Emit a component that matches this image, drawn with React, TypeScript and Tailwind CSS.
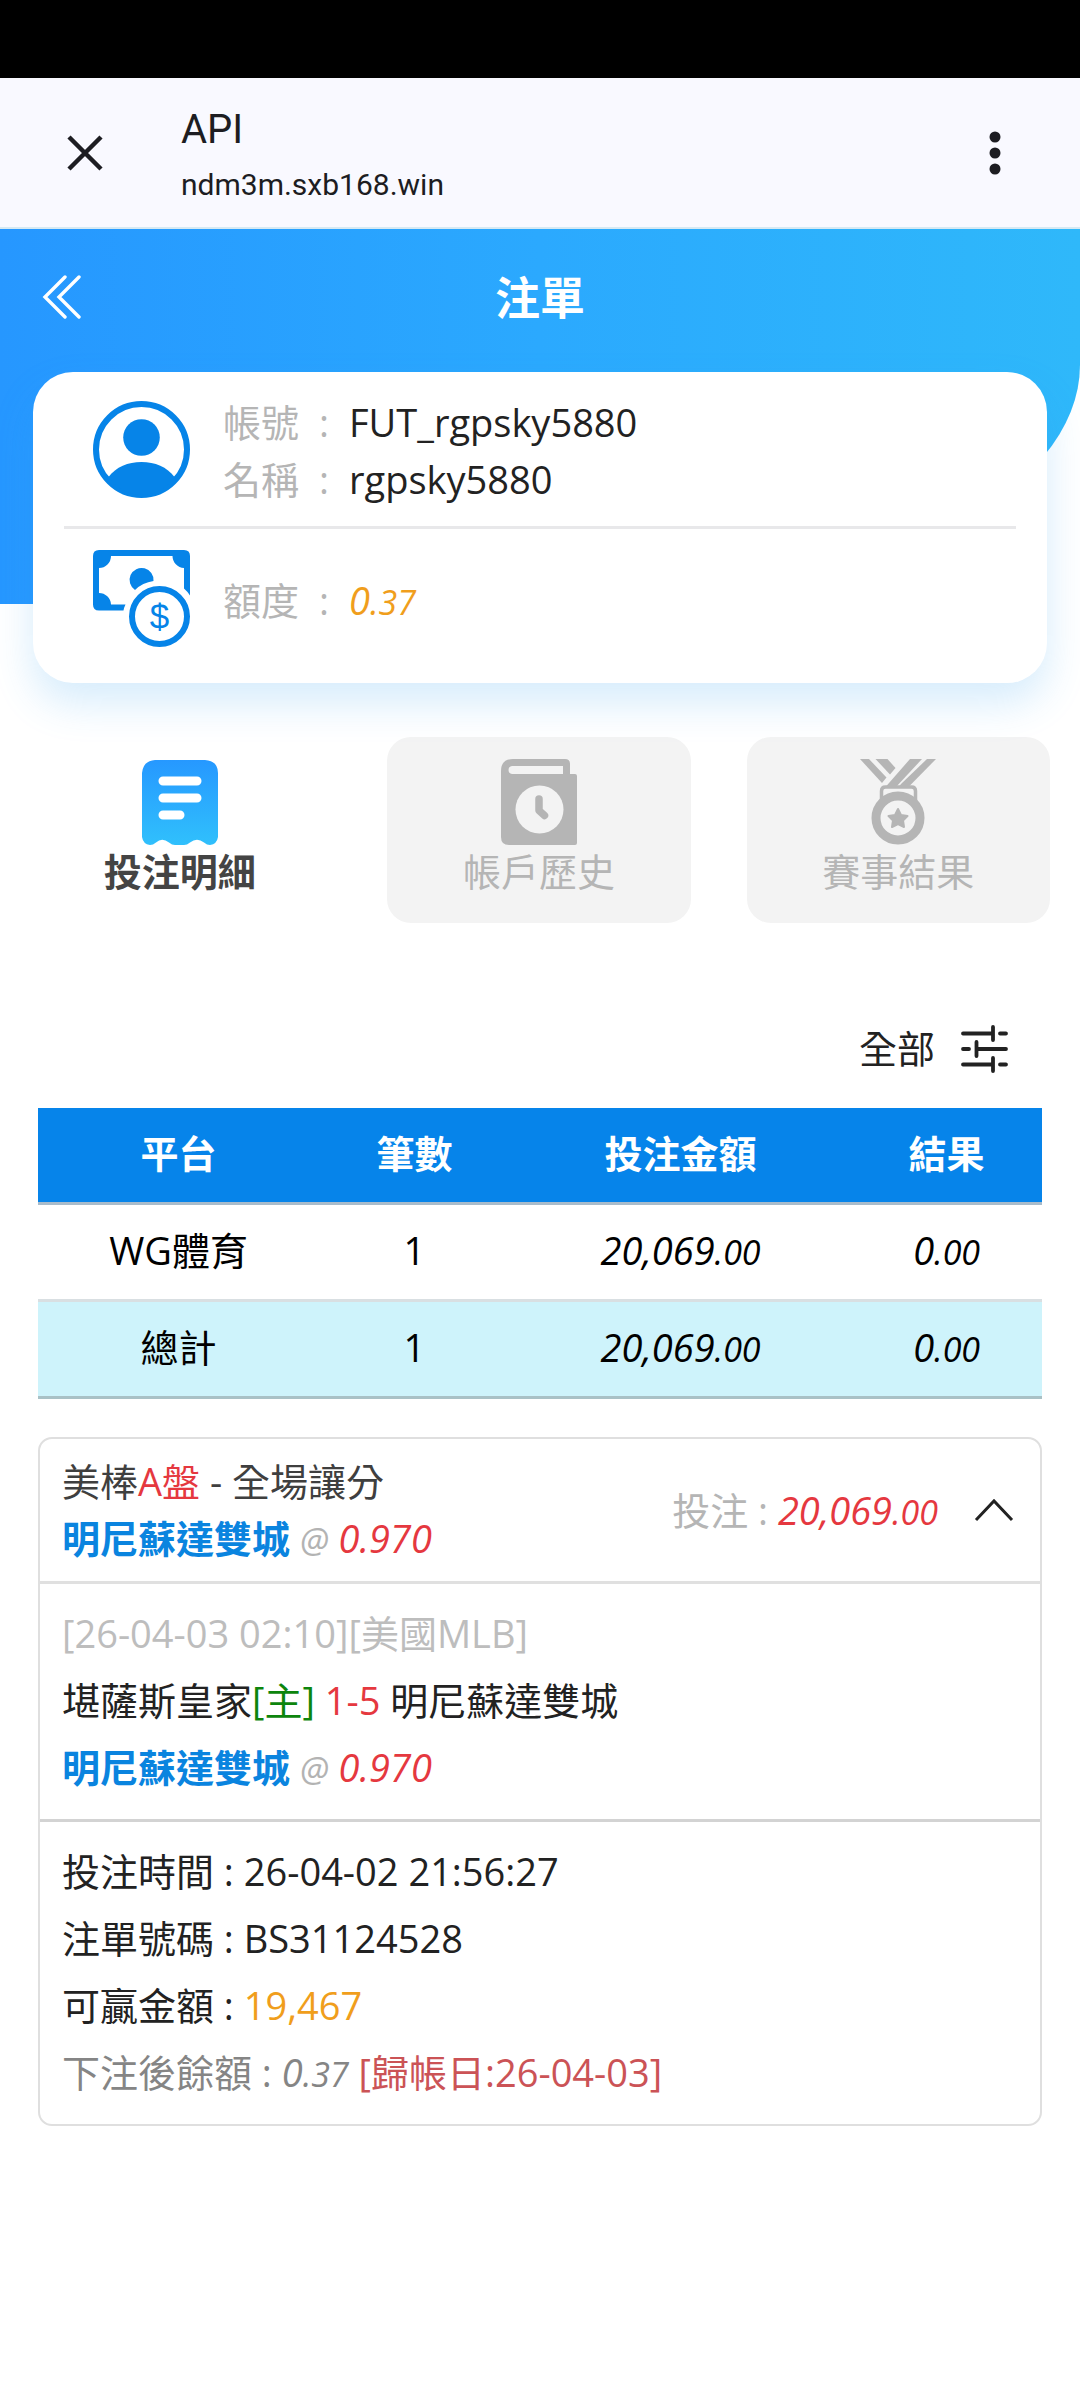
import React, { useState } from 'react'

type Tab = 'bets' | 'history' | 'results'

const CloseIcon = () => (
  <svg className="size-9" viewBox="0 0 36 36" fill="none" stroke="currentColor" strokeWidth="4.5">
    <path d="M2 2L34 34M34 2L2 34" />
  </svg>
)

const MoreIcon = () => (
  <svg className="h-11 w-3" viewBox="0 0 12 44" fill="currentColor">
    <circle cx="6" cy="6" r="5.5" />
    <circle cx="6" cy="22" r="5.5" />
    <circle cx="6" cy="38" r="5.5" />
  </svg>
)

const BackIcon = () => (
  <svg
    className="h-11 w-10"
    viewBox="0 0 40 44"
    fill="none"
    stroke="currentColor"
    strokeWidth="3.4"
    strokeLinecap="round"
  >
    <path d="M23 2L3 22L23 42M37 2L17 22L37 42" />
  </svg>
)

const UserIcon = () => (
  <svg className="size-[97px] shrink-0" viewBox="0 0 97 97" fill="#0684e8">
    <circle cx="48.5" cy="48.5" r="45.5" fill="none" stroke="#0684e8" strokeWidth="6" />
    <circle cx="48.5" cy="36.5" r="18.3" />
    <path d="M15.5 76C23 66 35 61 48.5 61S74 66 81.5 76C74 86.5 62 94 48.5 94S23 86.5 15.5 76Z" />
  </svg>
)

const MoneyIcon = () => (
  <svg className="size-[97px] shrink-0" viewBox="0 0 97 97" fill="#0684e8">
    <path
      fillRule="evenodd"
      d="M6 0H91Q97 0 97 6V45.5Q94.5 41.5 91 38.5V18A12 12 0 0 1 79.5 6H18A12 12 0 0 1 6 18V43A12 12 0 0 1 18 54.5H32.5Q31 57.5 30.5 60.5H6Q0 60.5 0 54.5V6Q0 0 6 0Z"
    />
    <path d="M42 40A12 12 0 1 1 60.5 31Q49.5 32.5 42 40Z" />
    <circle cx="66.5" cy="66.5" r="27.5" fill="none" stroke="#0684e8" strokeWidth="6" />
    <text x="66.5" y="79" fontSize="35" textAnchor="middle" fontFamily="Liberation Sans, sans-serif">
      $
    </text>
  </svg>
)

const ReceiptIcon = () => (
  <svg className="h-[86px] w-[76px]" viewBox="0 0 76 86">
    <defs>
      <linearGradient id="receipt" x1="0" y1="0" x2="0" y2="1">
        <stop offset="0" stopColor="#2698ff" />
        <stop offset="1" stopColor="#30c0fc" />
      </linearGradient>
    </defs>
    <path
      fill="url(#receipt)"
      d="M13 1H63Q76 2 76 14V78Q75 85 68 86Q65 86 62 83.5Q55 78 48 83.5Q45 86 42 86H33Q30 86 27 83.5Q20 78 14 83.5Q11 86 8 86Q1 85 0 78V14Q1 2 13 1Z"
    />
    <path d="M21 22H55M21 39H55M21 56H38" stroke="#fff" strokeWidth="9" strokeLinecap="round" />
  </svg>
)

const HistoryIcon = () => (
  <svg className="h-[86px] w-[76px]" viewBox="0 0 76 86">
    <path
      fill="#b5b5b5"
      fillRule="evenodd"
      d="M12 0H64Q69 0 69 5V15H74Q76 15 76 17V84Q76 86 74 86H8Q0 86 0 78V12Q0 0 12 0ZM11 7Q7.5 7.5 7.5 11T11 15H62V7Z"
    />
    <circle cx="38.5" cy="50.5" r="24" fill="#f3f3f3" />
    <path
      d="M38 40V51.5L43.5 56.5"
      fill="none"
      stroke="#b5b5b5"
      strokeWidth="7.5"
      strokeLinecap="round"
      strokeLinejoin="round"
    />
  </svg>
)

const MedalIcon = () => (
  <svg className="h-[86px] w-[76px]" viewBox="0 0 76 86" fill="#b5b5b5">
    <path d="M0 0H9L26.5 18.5L22 24Z" />
    <path d="M15.5 0H27.5L35.5 9L30 15.5Z" />
    <path d="M50 0H62L36 28H25.5Z" />
    <path d="M67 0H76L48.5 28H38.5L41 25Z" />
    <path d="M21.5 42V32Q21.5 28 25.5 28H51.5Q55.5 28 55.5 32V42" fill="none" stroke="#b5b5b5" strokeWidth="3.5" />
    <circle cx="38" cy="59" r="22" fill="none" stroke="#b5b5b5" strokeWidth="9" />
    <path
      strokeWidth="2"
      stroke="#b5b5b5"
      strokeLinejoin="round"
      d="M38 50L41 56L47.5 57L43 61.5L44 68L38 65L32 68L33 61.5L28.5 57L35 56Z"
    />
  </svg>
)

const FilterIcon = () => (
  <svg
    className="h-12 w-[47px]"
    viewBox="0 0 47 48"
    fill="none"
    stroke="currentColor"
    strokeWidth="3.8"
    strokeLinecap="round"
  >
    <path d="M2 8.5H32M32 2V15M39 8.5H45" />
    <path d="M2 24H8M15.5 17V31M15.5 24H45" />
    <path d="M2 39.5H32M32 33V46M39 39.5H45" />
  </svg>
)

const ArrowIcon: React.FC<{ open: boolean }> = ({ open }) => (
  <svg
    className={open ? 'h-6 w-10' : 'h-6 w-10 rotate-180'}
    viewBox="0 0 40 24"
    fill="none"
    stroke="currentColor"
    strokeWidth="3"
  >
    <path d="M2 22L20 3L38 22" />
  </svg>
)

// Decimals are set smaller than the whole part
const Amount: React.FC<{ value: string }> = ({ value }) => {
  const [whole, decimals] = value.split('.')
  return (
    <span className="italic">
      {whole}
      <span className="text-[34px] leading-none">.{decimals}</span>
    </span>
  )
}

const Odds: React.FC<{ team: string; odds: string }> = ({ team, odds }) => (
  <>
    <span className="font-bold text-[#0a84df]">{team}</span>{' '}
    <span className="text-[34px] leading-none text-[#b3b3b3] italic">@</span>{' '}
    <span className="text-[#e5383f] italic">{odds}</span>
  </>
)

const tabs: { id: Tab; label: string; icon: React.ReactNode }[] = [
  { id: 'bets', label: '投注明細', icon: <ReceiptIcon /> },
  { id: 'history', label: '帳戶歷史', icon: <HistoryIcon /> },
  { id: 'results', label: '賽事結果', icon: <MedalIcon /> },
]

const App: React.FC = () => {
  const [tab, setTab] = useState<Tab>('bets')
  const [open, setOpen] = useState(true)

  return (
    <div className="min-h-screen bg-white font-['Open_Sans','Noto_Sans_CJK_TC',sans-serif] text-[38px] leading-[57px] text-[#222]">
      <div className="h-[78px] bg-black" />

      <div className="flex items-center border-b-2 border-[#d5e9f3] bg-[#f9f9ff] py-5 pr-[79px] pl-[67px] font-['Roboto',sans-serif] text-[#1d1d22]">
        <button aria-label="Close">
          <CloseIcon />
        </button>
        <div className="ml-[78px] flex-1">
          <div className="text-[40px] leading-[64px]">API</div>
          <div className="text-[30px] leading-[45px]">ndm3m.sxb168.win</div>
        </div>
        <button aria-label="More">
          <MoreIcon />
        </button>
      </div>

      <header className="rounded-br-[480px_239px] bg-linear-to-r from-[#2697ff] via-[#2ba9fe] to-[#2fb8fa] pb-[239px] text-white">
        <div className="grid h-[136px] grid-cols-3 items-center px-[42px]">
          <button className="justify-self-start" aria-label="Back">
            <BackIcon />
          </button>
          <h1 className="text-center text-[45px] font-bold">注單</h1>
        </div>
      </header>

      <section className="relative mx-[33px] -mt-[232px] rounded-[40px] bg-white px-[31px] pb-9 shadow-[0_20px_40px_rgba(50,160,240,0.2)]">
        <div className="flex items-center gap-[33px] border-b-3 border-[#e8e8ea] px-[29px] pt-[18px] pb-[18px]">
          <UserIcon />
          <dl className="grid grid-cols-[126px_auto] pt-1">
            <dt className="flex justify-between pr-5 text-[#b5b5b5]">
              帳號<span>:</span>
            </dt>
            <dd>FUT_rgpsky5880</dd>
            <dt className="flex justify-between pr-5 text-[#b5b5b5]">
              名稱<span>:</span>
            </dt>
            <dd>rgpsky5880</dd>
          </dl>
        </div>
        <div className="flex items-center gap-[33px] px-[29px] pt-[21px]">
          <MoneyIcon />
          <dl className="grid grid-cols-[126px_auto] pt-1">
            <dt className="flex justify-between pr-5 text-[#b5b5b5]">
              額度<span>:</span>
            </dt>
            <dd className="text-[#f09e1c]">
              <Amount value="0.37" />
            </dd>
          </dl>
        </div>
      </section>

      <nav className="mt-[54px] grid grid-cols-3 gap-14 pr-[30px] pl-7">
        {tabs.map(({ id, label, icon }) => (
          <button
            key={id}
            className={
              id === tab
                ? 'flex flex-col items-center rounded-3xl pt-[22px] pb-[26px] leading-[52px] font-bold text-[#444]'
                : 'flex flex-col items-center rounded-3xl bg-[#f3f3f3] pt-[22px] pb-[26px] leading-[52px] text-[#b5b5b5]'
            }
            onClick={() => setTab(id)}
          >
            {icon}
            {label}
          </button>
        ))}
      </nav>

      <main className="px-[38px] pb-10">
        <div className="mt-[97px] mb-[31px] flex justify-end pr-[34px]">
          <button className="flex items-center gap-[26px]">
            全部
            <FilterIcon />
          </button>
        </div>

        <table className="w-full table-fixed text-center text-black">
          <thead>
            <tr className="border-b-3 border-[#a9bccb] bg-[#0684ea] text-white">
              <th className="w-[28%] pt-[17px] pb-5">平台</th>
              <th className="w-[19%] pt-[17px] pb-5">筆數</th>
              <th className="w-[34%] pt-[17px] pb-5">投注金額</th>
              <th className="w-[19%] pt-[17px] pb-5">結果</th>
            </tr>
          </thead>
          <tbody>
            <tr className="border-b-3 border-[#d9dfe2]">
              <td className="pt-[17px] pb-5">WG體育</td>
              <td className="pt-[17px] pb-5">1</td>
              <td className="pt-[17px] pb-5">
                <Amount value="20,069.00" />
              </td>
              <td className="pt-[17px] pb-5">
                <Amount value="0.00" />
              </td>
            </tr>
            <tr className="border-b-3 border-[#a9c1c6] bg-[#cef3fb]">
              <td className="pt-[17px] pb-5">總計</td>
              <td className="pt-[17px] pb-5">1</td>
              <td className="pt-[17px] pb-5">
                <Amount value="20,069.00" />
              </td>
              <td className="pt-[17px] pb-5">
                <Amount value="0.00" />
              </td>
            </tr>
          </tbody>
        </table>

        <article className="mt-[38px] rounded-[14px] border-2 border-[#dfdfdf]">
          <button
            className="flex w-full items-center py-3.5 pr-[26px] pl-[22px] text-left"
            aria-expanded={open}
            onClick={() => setOpen(!open)}
          >
            <span className="flex-1">
              <span className="block text-[#3f3f3f]">
                美棒<span className="text-[#e5383f]">A盤</span> - 全場讓分
              </span>
              <span className="block">
                <Odds team="明尼蘇達雙城" odds="0.970" />
              </span>
            </span>
            <span className="mr-9 text-[#b5b5b5]">
              投注 :{' '}
              <span className="text-[#e5383f]">
                <Amount value="20,069.00" />
              </span>
            </span>
            <ArrowIcon open={open} />
          </button>
          {open && (
            <div className="leading-[67px]">
              <div className="border-t-3 border-[#e0e0e0] px-[22px] pt-4 pb-[18px]">
                <p className="text-[#bdbdbd]">[26-04-03 02:10][美國MLB]</p>
                <p>
                  堪薩斯皇家<span className="text-[#0d850d]">[主]</span>{' '}
                  <span className="text-[#e5383f]">1-5</span> 明尼蘇達雙城
                </p>
                <p>
                  <Odds team="明尼蘇達雙城" odds="0.970" />
                </p>
              </div>
              <div className="border-t-3 border-[#d3d3d3] px-[22px] pt-4 pb-[18px]">
                <p>投注時間 : 26-04-02 21:56:27</p>
                <p>注單號碼 : BS31124528</p>
                <p>
                  可贏金額 : <span className="text-[#f09e1c]">19,467</span>
                </p>
                <p className="text-[#858585]">
                  下注後餘額 : <Amount value="0.37" />{' '}
                  <span className="text-[#cb5356]">[歸帳日:26-04-03]</span>
                </p>
              </div>
            </div>
          )}
        </article>
      </main>
    </div>
  )
}

export default App
